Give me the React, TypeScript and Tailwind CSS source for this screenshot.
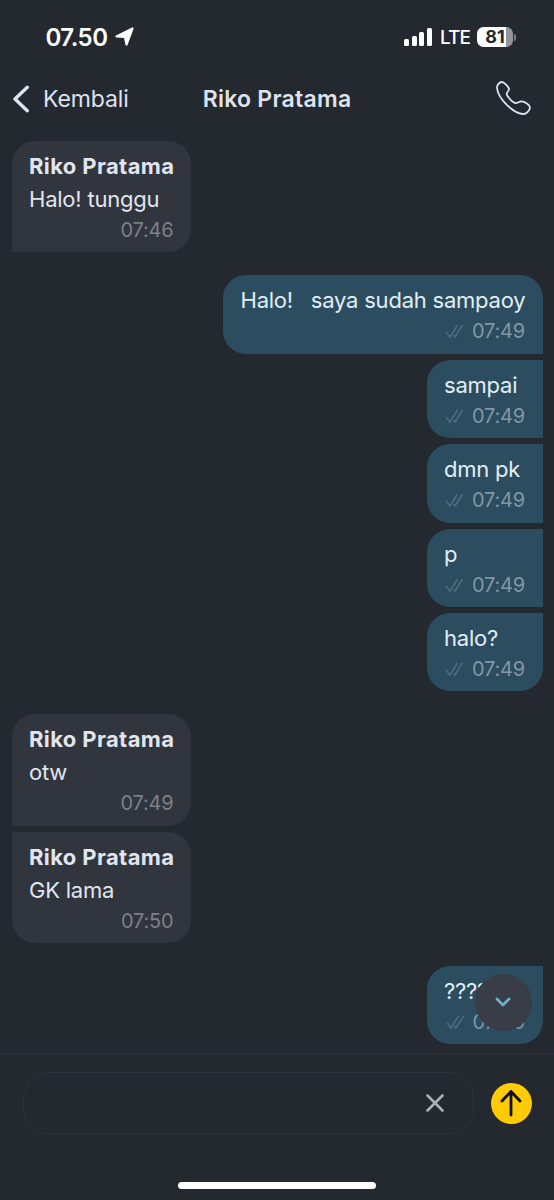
type Message = {
  id: number;
  text: string;
  time: string;
  corners: string;
  spacing: string;
  width?: string;
  mine?: boolean;
};

const messages: Message[] = [
  { id: 1, text: "Halo! tunggu", time: "07:46", corners: "rounded-[23px] rounded-bl-none", spacing: "" },
  { id: 2, text: "Halo!   saya sudah sampaoy", time: "07:49", corners: "rounded-[23px] rounded-br-none", spacing: "mt-[23.5px]", width: "w-[319.5px]", mine: true },
  { id: 3, text: "sampai", time: "07:49", corners: "rounded-l-[23px]", spacing: "mt-1.5", width: "w-[116px]", mine: true },
  { id: 4, text: "dmn pk", time: "07:49", corners: "rounded-l-[23px]", spacing: "mt-1.5", width: "w-[116px]", mine: true },
  { id: 5, text: "p", time: "07:49", corners: "rounded-l-[23px]", spacing: "mt-1.5", width: "w-[116px]", mine: true },
  { id: 6, text: "halo?", time: "07:49", corners: "rounded-[23px] rounded-tr-none", spacing: "mt-1.5", width: "w-[116px]", mine: true },
  { id: 7, text: "otw", time: "07:49", corners: "rounded-[23px] rounded-bl-none", spacing: "mt-[23px]" },
  { id: 8, text: "GK lama", time: "07:50", corners: "rounded-[23px] rounded-tl-none", spacing: "mt-1.5" },
  { id: 9, text: "????", time: "07:50", corners: "rounded-[23px] rounded-tr-none", spacing: "mt-[23px]", width: "w-[116px]", mine: true },
];

const StatusBar = () => (
  <div className="flex h-[74px] shrink-0 items-center pl-[45.5px] pr-[38px] text-white">
    <span className="pt-0.5 text-[24px] font-semibold leading-none tracking-[-0.5px]">07.50</span>
    <svg className="ml-[7px]" width="20" height="20" viewBox="0 0 20 20">
      <path
        d="M1.5 9.5 17.5 1.5 11.5 17.5 10 10Z"
        fill="currentColor"
        stroke="currentColor"
        strokeWidth="2.2"
        strokeLinejoin="round"
      />
    </svg>
    <div className="ml-auto flex items-center">
      <div className="flex h-[18px] items-end gap-[2.7px]">
        <div className="h-[7px] w-[5px] rounded-[1.5px] bg-white" />
        <div className="h-[10px] w-[5px] rounded-[1.5px] bg-white" />
        <div className="h-[14px] w-[5px] rounded-[1.5px] bg-white" />
        <div className="h-[18px] w-[5px] rounded-[1.5px] bg-white" />
      </div>
      <span className="ml-2 w-[29px] pt-px text-[19px] font-medium leading-none tracking-[-0.9px]">LTE</span>
      <div className="ml-2 flex h-5 w-9 items-center justify-center rounded-[6.5px] bg-linear-to-r from-white from-81% to-[#92959a] to-81% text-[18px] font-bold leading-none text-[#24282f]">
        81
      </div>
      <div className="ml-px h-[7px] w-[2px] rounded-r-full bg-[#7d8086]" />
    </div>
  </div>
);

const Header = () => (
  <header className="grid h-[50px] shrink-0 grid-cols-[1fr_auto_1fr] items-center px-3 text-[23px] leading-none text-[#dfe3ee]">
    <button className="flex items-center">
      <svg width="18" height="28" viewBox="0 0 18 28" fill="none">
        <path d="M15.3 2.3 3 14l12.3 11.7" stroke="currentColor" strokeWidth="3.4" strokeLinecap="round" strokeLinejoin="round" />
      </svg>
      <span className="ml-[13px] tracking-[-0.1px]">Kembali</span>
    </button>
    <h1 className="font-semibold tracking-[0.25px]">Riko Pratama</h1>
    <button className="mb-0.5 mr-[11px] justify-self-end">
      <svg width="35" height="35" viewBox="0 0 35 35" fill="none">
        <path
          d="M1 6.8C.8 4 3.5 1 5.8 1c2 0 6.9 4.8 7.2 7 .3 2-2.3 2.8-2.3 4.7 0 2.3 5.7 8.7 8.3 9.3 2.3.6 4.2-1.7 6.5-1.6 2.8.1 8.6 3.5 8.5 6.1-.1 2.7-3.8 6.500-6.500 6.500C17.500 33 1.800 17.500 1 6.800Z"
          stroke="currentColor"
          strokeWidth="1.8"
          strokeLinejoin="round"
        />
      </svg>
    </button>
  </header>
);

const Bubble = ({ message }: { message: Message }) => {
  const { text, time, corners, spacing, width, mine } = message;

  return (
    <div
      className={`flex shrink-0 flex-col px-[17.5px] pt-[9px] text-[22px] leading-[33px] ${corners} ${spacing} ${
        mine
          ? `h-[78.4px] self-end bg-[#2c4d5f] text-[#e1eef6] ${width}`
          : "h-[111.3px] w-[179.5px] self-start bg-[#31353e] text-[#e2e5ee]"
      }`}
    >
      {!mine && <p className="whitespace-nowrap font-bold tracking-[0.38px]">Riko Pratama</p>}
      <p className="whitespace-pre tracking-[-0.22px]">{text}</p>
      <div className={`flex items-center justify-end text-[20px] leading-[28px] tracking-[-0.2px] ${mine ? "text-[#8197a5]" : "text-[#7d8089]"}`}>
        {mine && (
          <svg className="mr-[8px] shrink-0 text-[#4f6c7d]" width="20" height="16" viewBox="0 0 20 16" fill="none">
            <path d="m2 9 4 5L13.500 2M9.500 12l1.500 2 7.500-12" stroke="currentColor" strokeWidth="1.600" />
          </svg>
        )}
        <span>{time}</span>
      </div>
    </div>
  );
};

const Composer = () => (
  <footer className="flex h-[147px] shrink-0 flex-col border-t-2 border-[#2b2f37] pl-[23px] pr-[22.5px]">
    <div className="mt-[17px] flex items-center justify-between">
      <div className="flex h-[62px] w-[451px] items-center justify-end rounded-[25px] border-[1.5px] border-[#2d3139] pr-[28px]">
        <svg width="20" height="20" viewBox="0 0 20 20" fill="none">
          <path d="m2.500 2.500 15 15m0-15-15 15" stroke="#aeb0b3" strokeWidth="2.600" strokeLinecap="round" />
        </svg>
      </div>
      <button className="flex size-[41px] items-center justify-center rounded-full bg-[#ffcb05]">
        <svg width="24" height="28" viewBox="0 0 24 28" fill="none">
          <path d="M12 26V2.500M3 12l9-9.500 9 9.500" stroke="#101010" strokeWidth="2.800" strokeLinecap="round" strokeLinejoin="round" />
        </svg>
      </button>
    </div>
    <div className="mb-[11.5px] mt-auto h-[7px] w-[198px] self-center rounded-full bg-white" />
  </footer>
);

export default function App() {
  return (
    <div className="flex h-[1200px] w-[554px] flex-col overflow-hidden bg-[#24282f] font-['Inter','Liberation_Sans',sans-serif]">
      <StatusBar />
      <Header />
      <main className="relative flex min-h-0 flex-1 flex-col px-[11.5px] pt-[16.6px]">
        {messages.map((message) => (
          <Bubble key={message.id} message={message} />
        ))}
        {/* Scroll to latest */}
        <button className="absolute bottom-[22px] right-[22.5px] flex size-[57px] items-center justify-center rounded-full bg-[#383d47]">
          <svg width="16" height="11" viewBox="0 0 16 11" fill="none">
            <path d="m2 2 6 6 6-6" stroke="#71afc5" strokeWidth="2.800" strokeLinecap="round" strokeLinejoin="round" />
          </svg>
        </button>
      </main>
      <Composer />
    </div>
  );
}
